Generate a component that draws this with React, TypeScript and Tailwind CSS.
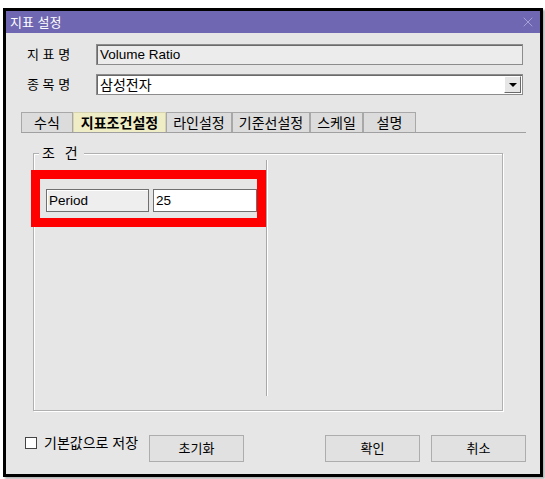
import { X } from "lucide-react";

const font = "font-['Liberation_Sans','Noto_Sans_CJK_KR',sans-serif]";

const tabs = [
  { label: "수식", w: "w-[52px]" },
  { label: "지표조건설정", w: "w-[93px]", active: true },
  { label: "라인설정", w: "w-[66px]" },
  { label: "기준선설정", w: "w-[78px]" },
  { label: "스케일", w: "w-[53px]" },
  { label: "설명", w: "w-[53px]" },
];

function Button({ label, className = "" }: { label: string; className?: string }) {
  return (
    <div
      className={`w-[95px] h-[27px] flex items-center justify-center border border-[#adadad] bg-[#e1e1e1] text-[13px] text-black ${className}`}
    >
      {label}
    </div>
  );
}

export default function App() {
  return (
    <div className={`w-[545px] h-[479px] bg-white pt-[8px] pl-[3px] ${font}`}>
      <div className="w-[540px] h-[469px] border-[3px] border-black bg-[#e6e6e6] flex flex-col shadow-[2px_2px_2px_rgba(0,0,0,0.3)]">
        {/* title bar */}
        <div className="h-[22px] bg-[#6f67b2] flex items-center justify-between pl-[4px] pr-[4px]">
          <span className="text-white text-[13px] leading-none">지표 설정</span>
          <X className="w-[16px] h-[16px] text-[#b3aede]" strokeWidth={1.2} />
        </div>

        {/* name rows */}
        <div className="flex items-center mt-[11px]">
          <span className="w-[90px] pl-[21px] text-[13px] text-black">지 표 명</span>
          <div className="w-[427px] h-[21px] bg-[#ececec] border border-[#8c8c8c] shadow-[inset_1px_1px_0_#6a6a6a] flex items-center pl-[3px] text-[13.5px] text-black leading-none">
            Volume Ratio
          </div>
        </div>
        <div className="flex items-center mt-[9px]">
          <span className="w-[90px] pl-[21px] text-[13px] text-black">종 목 명</span>
          <div className="w-[427px] h-[21px] bg-white border border-[#8c8c8c] shadow-[inset_1px_1px_0_#6a6a6a] flex items-center justify-between pl-[3px] pr-[1px] text-[14px] text-black leading-none">
            <span>삼성전자</span>
            <div className="w-[17px] h-[17px] bg-[#e6e6e6] border border-t-white border-l-white border-b-[#6a6a6a] border-r-[#6a6a6a] flex items-center justify-center">
              <div className="w-0 h-0 border-l-[4px] border-r-[4px] border-t-[4px] border-l-transparent border-r-transparent border-t-black" />
            </div>
          </div>
        </div>

        {/* tabs */}
        <div className="ml-[15px] mt-[17px] w-[505px] h-[21px] flex border-b border-[#a0a0a0]">
          {tabs.map((t) => (
            <div
              key={t.label}
              className={`${t.w} h-[20px] flex items-center justify-center border border-b-0 text-[14px] text-black leading-none ${
                t.active ? "bg-[#efedc6] border-[#d6d4b0] font-bold" : "bg-[#dcdcdc] border-[#a8a8a8]"
              }`}
            >
              {t.label}
            </div>
          ))}
        </div>

        {/* condition group */}
        <div className="relative ml-[27px] mt-[20px] w-[470px] h-[258px] border border-[#b0b0b0] shadow-[inset_1px_1px_0_#ffffff,1px_1px_0_#ffffff] flex">
          <span className="absolute -top-[9px] left-[5px] px-[3px] bg-[#e6e6e6] text-[14px] text-black leading-[16px] tracking-[3px]">조 건</span>
          <div className="w-[232px] pt-[16px]">
            <div className="-ml-[3px] w-[235px] h-[57px] border-[9px] border-[#ff0000] flex items-start pt-[10px] pl-[6px] gap-[4px]">
              <div className="w-[103px] h-[23px] bg-[#eeeeee] border border-[#707070] shadow-[inset_1px_1px_0_#ffffff] flex items-center pl-[2px] text-[13.5px] text-black leading-none">
                Period
              </div>
              <div className="w-[104px] h-[23px] bg-white border border-[#707070] flex items-center pl-[2px] text-[13.5px] text-black leading-none">
                25
              </div>
            </div>
          </div>
          <div className="mt-[6px] h-[236px] w-[2px] border-l border-[#a8a8a8] bg-white" />
        </div>

        {/* bottom row */}
        <div className="flex items-start mt-[24px] pl-[19px]">
          <div className="h-[16px] flex items-center gap-[7px] w-[124px]">
            <div className="w-[12px] h-[12px] bg-white border border-[#444444]" />
            <span className="text-[14px] text-black leading-none whitespace-nowrap">기본값으로 저장</span>
          </div>
          <Button label="초기화" />
          <Button label="확인" className="ml-[81px]" />
          <Button label="취소" className="ml-[11px]" />
        </div>
      </div>
    </div>
  );
}
